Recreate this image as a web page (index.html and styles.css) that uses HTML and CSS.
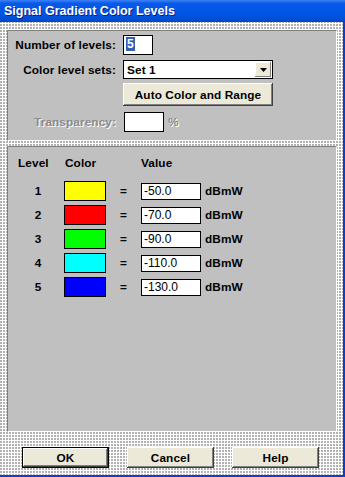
FILE: index.html
```html
<!DOCTYPE html>
<html>
<head>
    <title>Signal Gradient Color Levels</title>
    <link rel="stylesheet" href="styles.css">
</head>
<body>

<div class="window">
    <div class="titlebar">Signal Gradient Color Levels</div>

    <div class="client">
        <div class="panel settings">
            <div class="field f-num">
                <label>Number of levels:</label>
                <div class="edit num"><span class="sel">5</span></div>
            </div>
            <div class="field f-set">
                <label>Color level sets:</label>
                <div class="combo">
                    <span class="combo-text">Set 1</span>
                    <span class="drop">
                        <svg width="7" height="4" viewBox="0 0 7 4"><path d="M0 0h7L3.5 4z" fill="#000"/></svg>
                    </span>
                </div>
            </div>
            <div class="field f-auto">
                <label></label>
                <div class="btn auto">Auto Color and Range</div>
            </div>
            <div class="field f-trans disabled">
                <label>Transparency:</label>
                <div class="edit pct"></div>
                <span class="pct-sign">%</span>
            </div>
        </div>

        <div class="panel levels">
            <div class="row head">
                <span class="c-level">Level</span>
                <span class="c-color">Color</span>
                <span class="c-eq"></span>
                <span class="c-value">Value</span>
            </div>
            <div class="row">
                <span class="c-level">1</span>
                <span class="c-color"><span class="swatch" style="background:#ffff00"></span></span>
                <span class="c-eq">=</span>
                <span class="c-value"><span class="edit val">-50.0</span><span class="unit">dBmW</span></span>
            </div>
            <div class="row">
                <span class="c-level">2</span>
                <span class="c-color"><span class="swatch" style="background:#ff0000"></span></span>
                <span class="c-eq">=</span>
                <span class="c-value"><span class="edit val">-70.0</span><span class="unit">dBmW</span></span>
            </div>
            <div class="row">
                <span class="c-level">3</span>
                <span class="c-color"><span class="swatch" style="background:#00ff00"></span></span>
                <span class="c-eq">=</span>
                <span class="c-value"><span class="edit val">-90.0</span><span class="unit">dBmW</span></span>
            </div>
            <div class="row">
                <span class="c-level">4</span>
                <span class="c-color"><span class="swatch" style="background:#00ffff"></span></span>
                <span class="c-eq">=</span>
                <span class="c-value"><span class="edit val">-110.0</span><span class="unit">dBmW</span></span>
            </div>
            <div class="row">
                <span class="c-level">5</span>
                <span class="c-color"><span class="swatch" style="background:#0000ff"></span></span>
                <span class="c-eq">=</span>
                <span class="c-value"><span class="edit val">-130.0</span><span class="unit">dBmW</span></span>
            </div>
        </div>

        <div class="actions">
            <div class="btn dlg default">OK</div>
            <div class="btn dlg">Cancel</div>
            <div class="btn dlg">Help</div>
        </div>
    </div>
</div>

</body>
</html>
```

FILE: styles.css
```css
body { margin: 0; font-family: "Liberation Sans", Arial, sans-serif; font-size: 11.8px; letter-spacing: 0.1px; font-weight: bold; color: #000; }

.window { width: 345px; height: 477px; box-sizing: border-box; display: flex; flex-direction: column; border-right: 2px solid #0a3fd0; border-bottom: 2px solid #0a3fd0; background-color: #b2b2b2; background-image: linear-gradient(90deg, transparent 2px, #fff 2px), linear-gradient(transparent 2px, #fff 2px); background-size: 3px 3px; }

.titlebar { height: 22px; flex: none; padding-left: 4px; line-height: 22px; font-size: 12.5px; letter-spacing: 0; color: #fff; text-shadow: 1px 1px #0a1e8a; background: linear-gradient(#3d84f7, #0759ea 15%, #0054e3 70%, #0046c8); margin-right: -2px; }

.client { flex: 1; display: flex; flex-direction: column; padding: 8px 6px 0 7px; }

.panel { background: #c0c0c0; border-top: 1px solid #808080; border-left: 1px solid #808080; border-right: 1px solid #fff; border-bottom: 1px solid #fff; box-sizing: border-box; }

/* top settings */
.settings { height: 111px; padding-top: 4px; }
.field { display: flex; align-items: center; }
.field label { width: 108px; text-align: right; margin-right: 7px; flex: none; }
.f-num { height: 20px; }
.f-set { height: 19px; margin-top: 5px; }
.f-auto { height: 23px; margin-top: 4px; }
.f-trans { height: 19px; margin-top: 6px; }

.edit { background: #fff; border: 1px solid #000; box-sizing: border-box; font-weight: normal; font-size: 12px; letter-spacing: 0; }
.num { width: 30px; height: 20px; padding: 1px 0 0 2px; }
.sel { background: #3162b4; color: #fff; font-weight: bold; padding: 0 1px; }
.pct { width: 40px; height: 20px; margin-left: 1px; }
.pct-sign { margin-left: 4px; }
.disabled { color: #8a8a8a; text-shadow: 1px 1px #fff; }

.combo { width: 150px; height: 19px; display: flex; align-items: center; background: #fff; border: 1px solid #000; box-sizing: border-box; }
.combo-text { flex: 1; padding-left: 3px; }
.drop { width: 16px; height: 15px; margin-right: 1px; display: flex; align-items: center; justify-content: center; background: #ece9d8; box-shadow: inset -1px -1px #808080, inset 1px 1px #fff; }

.btn { background: #ece9d8; display: flex; align-items: center; justify-content: center; box-sizing: border-box; box-shadow: inset -1px -1px #404040, inset 1px 1px #fff, inset -2px -2px #808080; }
.auto { width: 150px; height: 23px; }

/* levels table */
.levels { height: 286px; margin-top: 5px; padding-top: 9px; }
.row { display: flex; align-items: center; height: 20px; margin-bottom: 4px; }
.row.head { height: 14px; margin-bottom: 11px; }
.c-level { width: 52px; padding-left: 4px; text-align: center; }
.head .c-level { width: 46px; padding-left: 10px; text-align: left; }
.c-color { width: 42px; display: flex; }
.head .c-color { padding-left: 1px; width: 41px; }
.swatch { width: 42px; height: 20px; border: 1px solid #000; box-sizing: border-box; }
.c-eq { width: 35px; text-align: center; }
.c-value { display: flex; align-items: center; }
.val { width: 60px; height: 17px; line-height: 14px; padding-left: 2px; }
.unit { margin-left: 4px; }

/* dialog buttons */
.actions { display: flex; margin-top: 15px; padding-left: 15px; }
.dlg { width: 87px; height: 21px; margin-right: 18px; }
.dlg.default { border: 1px solid #000; }
```
